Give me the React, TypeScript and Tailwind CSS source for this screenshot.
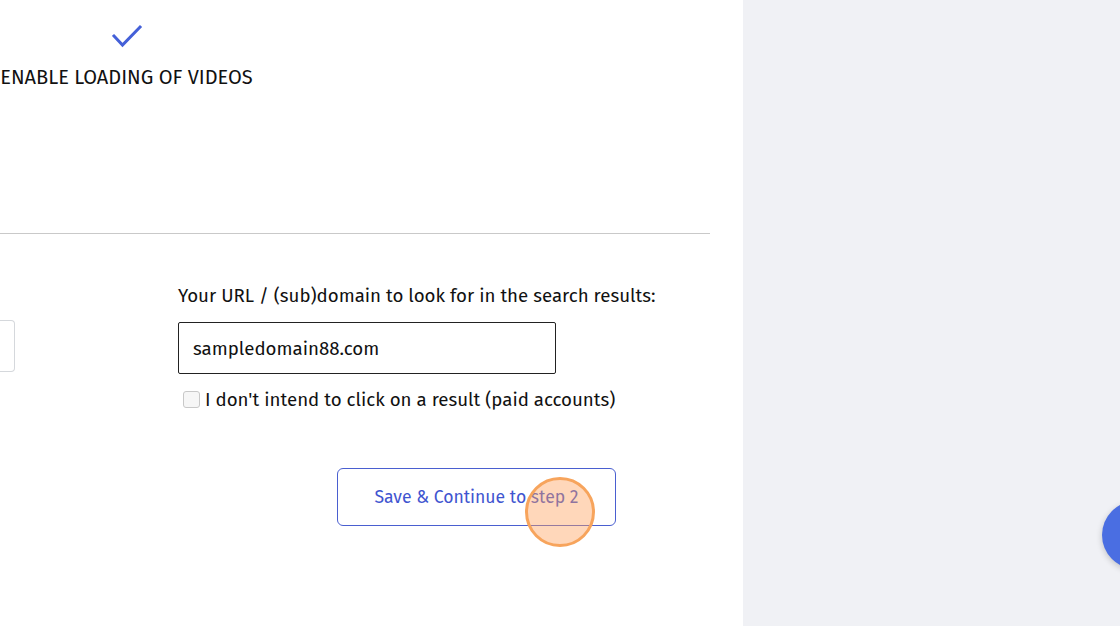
import React from "react";

export default function App() {
  return (
    <div
      className="flex w-[1120px] h-[626px] overflow-hidden bg-white"
      style={{ fontFamily: '"Fira Sans", Lato, "Open Sans", sans-serif' }}
    >
      <div className="relative w-[743px] shrink-0 bg-white">
        <div className="h-[234px] border-b border-[#c9c9c9] w-[710px] flex flex-col">
          <div className="w-[253px] flex flex-col items-center pt-[24px]">
            <svg width="31" height="24" viewBox="0 0 31 24" className="ml-[1px]">
              <path d="M2 12 L10.5 21 L28 3" fill="none" stroke="#4460d8" strokeWidth="3" strokeLinecap="square" />
            </svg>
            <div className="mt-[17px] text-[20px] leading-[24px] text-[#111] whitespace-nowrap">
              ENABLE LOADING OF VIDEOS
            </div>
          </div>
        </div>
        <div className="flex">
          <div className="w-[178px] shrink-0 pt-[86px]">
            <div className="w-[15px] h-[52px] border border-[#d5d8dc] border-l-0 rounded-r-[4px]" />
          </div>
          <div className="flex flex-col pt-[50px]">
            <div className="text-[18.7px] leading-[24px] text-[#111] whitespace-nowrap">
              Your URL / (sub)domain to look for in the search results:
            </div>
            <div className="mt-[14px] w-[378px] h-[52px] border border-[#222] rounded-[2px] flex items-center pl-[14px] pt-[2px] text-[18.7px] text-[#111]">
              sampledomain88.com
            </div>
            <div className="mt-[14px] flex items-center ml-[5px]">
              <div className="w-[17px] h-[17px] border border-[#c8c8c8] rounded-[3px] bg-[#f6f6f6] -mt-[2px]" />
              <span className="ml-[5px] text-[18.7px] leading-[24px] text-[#111] whitespace-nowrap">
                I don't intend to click on a result (paid accounts)
              </span>
            </div>
            <div className="mt-[56px] ml-[159px] w-[279px] h-[58px] border border-[#4a5fd0] rounded-[6px] flex items-center justify-center pt-[3px] text-[17.6px] text-[#3f55d0] whitespace-nowrap">
              Save &amp; Continue to step 2
            </div>
          </div>
        </div>
        <div className="absolute left-[525px] top-[477px] w-[70px] h-[70px] rounded-full border-[3px] border-[#f7a45c] bg-[rgba(255,160,90,0.42)]" />
      </div>
      <div className="relative flex-1 bg-[#f0f1f5]">
        <div className="absolute left-[359px] top-[501px] w-[68px] h-[68px] rounded-full bg-[#4a6ee2] shadow-[0_2px_6px_rgba(0,0,0,0.2)]" />
      </div>
    </div>
  );
}
